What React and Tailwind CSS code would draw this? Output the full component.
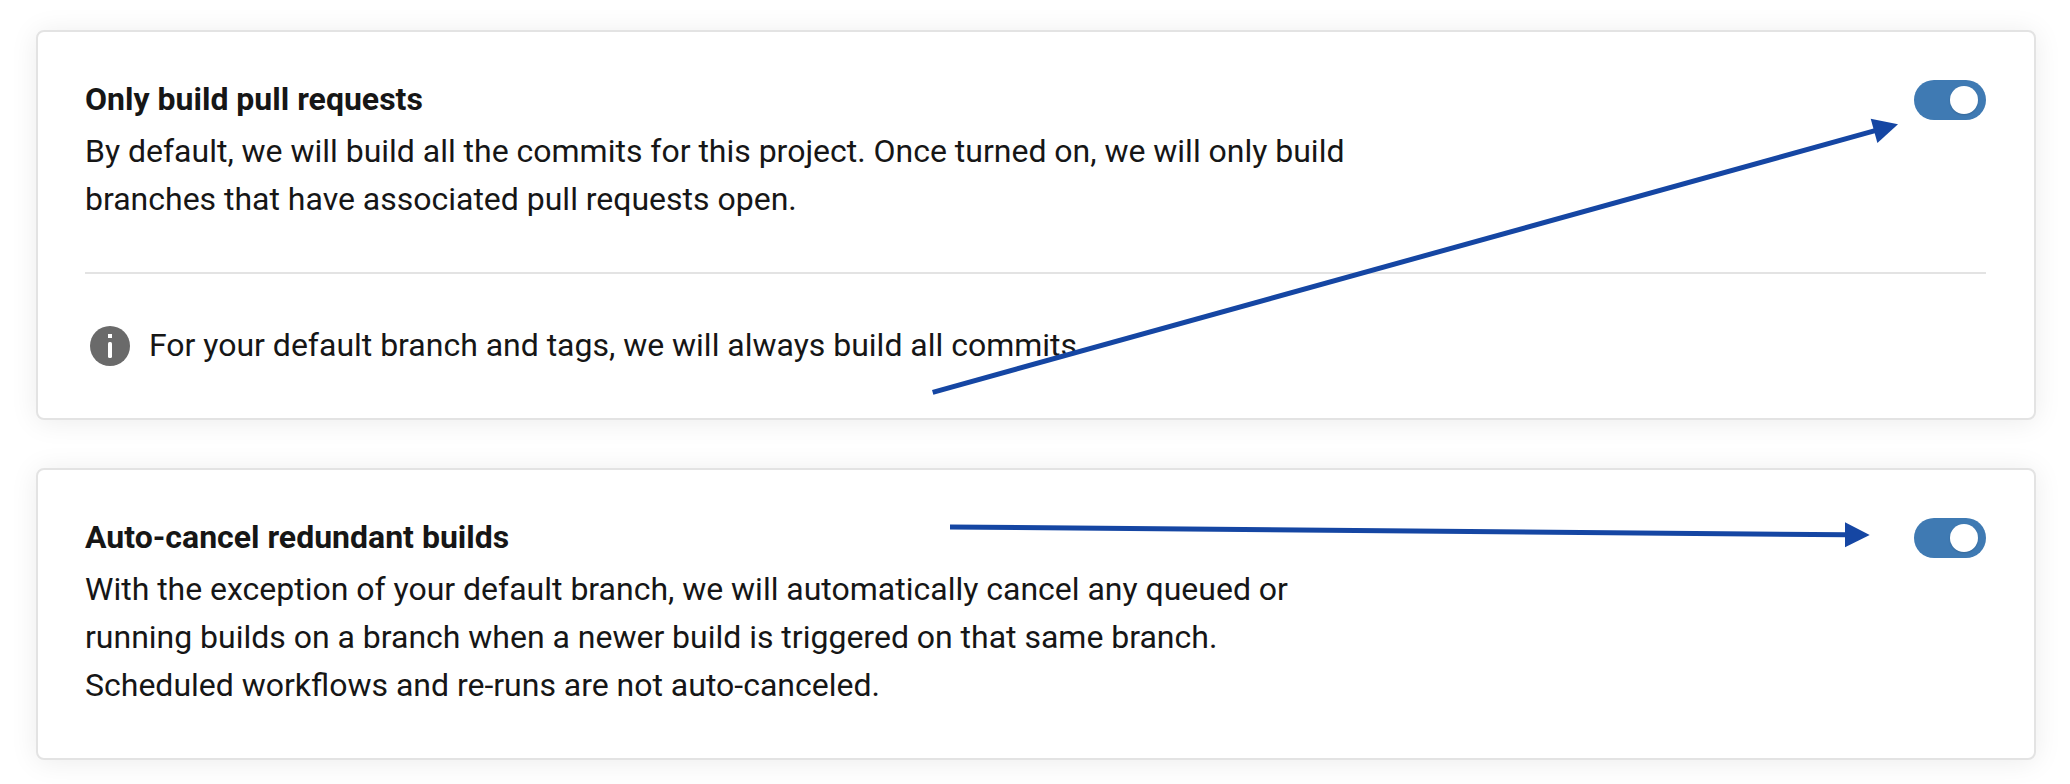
function Toggle({ label }) {
  return (
    <button
      type="button"
      role="switch"
      aria-checked="true"
      aria-label={label}
      className="flex h-10 w-[72px] shrink-0 items-center justify-end rounded-full bg-[#3f7ab3] pr-2"
    >
      <span className="size-7 rounded-full bg-white shadow-[0_1px_2px_rgba(0,0,0,0.15)]" />
    </button>
  );
}

function InfoIcon() {
  return (
    <svg viewBox="0 0 48 48" className="ml-px size-12 shrink-0" aria-hidden="true">
      <circle cx="24" cy="24" r="20" fill="#6a6a6a" />
      <rect x="22" y="12" width="4" height="4" fill="#fff" />
      <rect x="22" y="20" width="4" height="16" rx="1.5" fill="#fff" />
    </svg>
  );
}

function SettingCard({ title, lines, note }) {
  return (
    <section className="rounded-lg border-2 border-[#e3e3e3] bg-white py-12 pr-12 pl-[47px] shadow-[0_2px_28px_rgba(0,0,0,0.08)]">
      <div className="flex items-start justify-between">
        <div className="-mt-px pb-px">
          <h2 className="mb-2 text-[32px] leading-10 font-bold">{title}</h2>
          <p className="text-[32px] leading-[48px] [word-spacing:-0.07px]">
            {lines.map((line) => (
              <span key={line} className="block whitespace-nowrap">
                {line}
              </span>
            ))}
          </p>
        </div>
        <Toggle label={title} />
      </div>
      {note && (
        <div className="mt-12 flex items-center gap-[15px] border-t-2 border-[#e3e3e3] pt-12">
          <InfoIcon />
          <p className="-mt-0.5 text-[32px] leading-[48px] whitespace-nowrap [word-spacing:-0.07px]">
            {note}
          </p>
        </div>
      )}
    </section>
  );
}

function Arrows() {
  return (
    <svg
      viewBox="0 0 2070 784"
      className="pointer-events-none absolute inset-0 h-[784px] w-[2070px]"
      aria-hidden="true"
    >
      <g stroke="#1546a3" strokeWidth="5" fill="none">
        <path d="M932.7 392.3 L1876 130.4" />
        <path d="M950 527 L1847 534.8" />
      </g>
      <g fill="#1546a3">
        <path d="M1870.7 118.8 L1898 124.3 L1877.4 143 Z" />
        <path d="M1845 522.3 L1869.7 535 L1845 547.2 Z" />
      </g>
    </svg>
  );
}

export default function App() {
  return (
    <main className="relative flex h-[784px] w-[2070px] flex-col gap-12 overflow-hidden bg-white pt-[30px] pr-[34px] pl-9 font-['Roboto',sans-serif] text-[#161616]">
      <SettingCard
        title="Only build pull requests"
        lines={[
          "By default, we will build all the commits for this project. Once turned on, we will only build",
          "branches that have associated pull requests open.",
        ]}
        note="For your default branch and tags, we will always build all commits"
      />
      <SettingCard
        title="Auto-cancel redundant builds"
        lines={[
          "With the exception of your default branch, we will automatically cancel any queued or",
          "running builds on a branch when a newer build is triggered on that same branch.",
          "Scheduled workflows and re-runs are not auto-canceled.",
        ]}
      />
      <Arrows />
    </main>
  );
}
